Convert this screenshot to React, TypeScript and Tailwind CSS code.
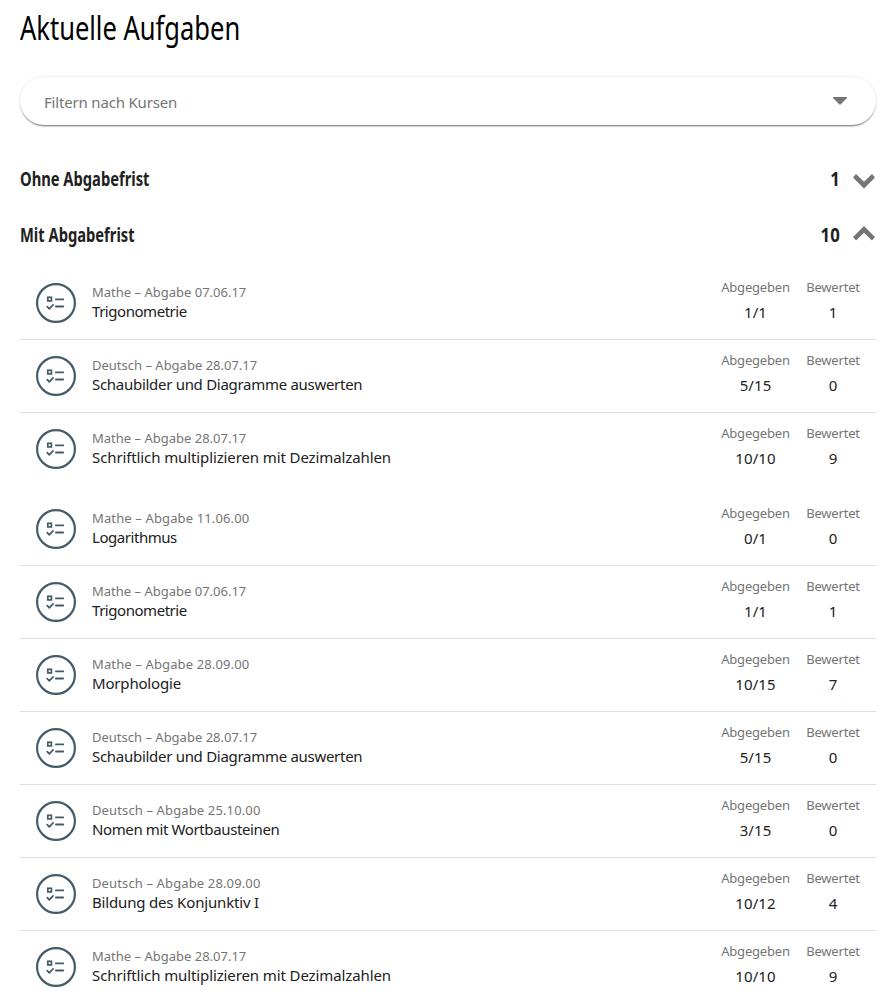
type Task = { course: string; due: string; title: string; submitted: string; graded: string };

const groups: Task[][] = [
  [
    { course: 'Mathe', due: '07.06.17', title: 'Trigonometrie', submitted: '1/1', graded: '1' },
    { course: 'Deutsch', due: '28.07.17', title: 'Schaubilder und Diagramme auswerten', submitted: '5/15', graded: '0' },
    { course: 'Mathe', due: '28.07.17', title: 'Schriftlich multiplizieren mit Dezimalzahlen', submitted: '10/10', graded: '9' },
  ],
  [
    { course: 'Mathe', due: '11.06.00', title: 'Logarithmus', submitted: '0/1', graded: '0' },
    { course: 'Mathe', due: '07.06.17', title: 'Trigonometrie', submitted: '1/1', graded: '1' },
    { course: 'Mathe', due: '28.09.00', title: 'Morphologie', submitted: '10/15', graded: '7' },
    { course: 'Deutsch', due: '28.07.17', title: 'Schaubilder und Diagramme auswerten', submitted: '5/15', graded: '0' },
    { course: 'Deutsch', due: '25.10.00', title: 'Nomen mit Wortbausteinen', submitted: '3/15', graded: '0' },
    { course: 'Deutsch', due: '28.09.00', title: 'Bildung des Konjunktiv I', submitted: '10/12', graded: '4' },
    { course: 'Mathe', due: '28.07.17', title: 'Schriftlich multiplizieren mit Dezimalzahlen', submitted: '10/10', graded: '9' },
  ],
];

const titleTracking: Record<string, string> = {
  'Trigonometrie': 'tracking-[-0.46px]',
  'Schaubilder und Diagramme auswerten': 'tracking-[-0.29px]',
  'Schriftlich multiplizieren mit Dezimalzahlen': 'tracking-[-0.11px]',
  'Logarithmus': 'tracking-[-0.45px]',
  'Morphologie': 'tracking-[-0.18px]',
  'Nomen mit Wortbausteinen': 'tracking-[-0.38px]',
  'Bildung des Konjunktiv I': 'tracking-[-0.17px]',
};

function TaskIcon() {
  return (
    <svg className="size-10 shrink-0" viewBox="0 0 40 40" fill="none" stroke="#455b6a">
      <circle cx="20" cy="20" r="18.9" strokeWidth="2.2" />
      <rect x="11.8" y="14.3" width="3.6" height="3.6" strokeWidth="1.7" />
      <path d="M19.9 16.4h7.3M19.9 23.5h7.3" strokeWidth="1.8" strokeLinecap="round" />
      <path d="M11.2 23.6l2.1 2.2 3.8-4" strokeWidth="1.7" strokeLinecap="round" strokeLinejoin="round" />
    </svg>
  );
}

function Chevron({ up = false }: { up?: boolean }) {
  return (
    <svg className="h-6 w-6 shrink-0" viewBox="0 0 24 24" fill="#757575">
      <path d={up ? 'M12 2.1L23 13.1L20 16.4L12 8.7L4 16.4L1 13.1Z' : 'M12 20.4L1 9.4L4 6.1L12 13.8L20 6.1L23 9.4Z'} />
    </svg>
  );
}

function Section({ title, count, open = false }: { title: string; count: string; open?: boolean }) {
  return (
    <div className="flex h-14 items-center font-bold text-[19px] text-[#212121]">
      <h2 className="flex-1 pb-0.5"><span className="inline-block origin-left scale-x-[0.774]">{title}</span></h2>
      <span className="mr-3 inline-block origin-right scale-x-[0.88] pb-0.5">{count}</span>
      <Chevron up={open} />
    </div>
  );
}

function Stat({ label, value, width }: { label: string; value: string; width: string }) {
  return (
    <div className={`flex flex-col items-center whitespace-nowrap ${width}`}>
      <span className="text-[13px] leading-5 tracking-[-0.18px] text-[#757575]">{label}</span>
      <span className="mt-[5px] text-[15px] leading-5 tracking-[0.1px] text-[#212121]">{value}</span>
    </div>
  );
}

function Row({ task, last }: { task: Task; last: boolean }) {
  const metaTracking = task.due.endsWith('.00') ? 'tracking-[0.13px]' : '';
  return (
    <li className={`flex h-[73px] items-start border-b px-4 ${last ? 'border-transparent' : 'border-[#e0e0e0]'}`}>
      <div className="flex h-[72px] flex-1 items-center gap-4">
        <TaskIcon />
        <div className="pb-0.5 whitespace-nowrap">
          <p className={`text-[13px] leading-[19px] text-[#757575] ${metaTracking}`}>{task.course} – Abgabe {task.due}</p>
          <p className={`text-[15px] leading-[19px] text-[#212121] ${titleTracking[task.title]}`}>{task.title}</p>
        </div>
      </div>
      <div className="flex gap-4 pt-2.5">
        <Stat label="Abgegeben" value={task.submitted} width="w-[69px]" />
        <Stat label="Bewertet" value={task.graded} width="w-[54px]" />
      </div>
    </li>
  );
}

export default function App() {
  return (
    <main className="h-[1003px] overflow-hidden bg-white px-5 font-['Noto_Sans',sans-serif]">
      <h1 className="flex h-[77px] items-start pt-[5px] text-[33px] leading-[46px] text-black">
        <span className="origin-left scale-x-[0.773] whitespace-nowrap">Aktuelle Aufgaben</span>
      </h1>
      <div className="flex h-12 items-center justify-between rounded-full bg-white pr-[29px] pl-6 shadow-[0_2px_2px_-1px_rgba(0,0,0,0.55),0_0_3px_rgba(0,0,0,0.14)]">
        <span className="pt-0.5 text-[15px] tracking-[-0.18px] text-[#757575]">Filtern nach Kursen</span>
        <svg className="h-2 w-[14px]" viewBox="0 0 14 8" fill="#757575"><path d="M0 0h14v1L7 8 0 1z" /></svg>
      </div>
      <div className="pt-[27px]">
        <Section title="Ohne Abgabefrist" count="1" />
        <Section title="Mit Abgabefrist" count="10" open />
      </div>
      <div className="flex flex-col gap-[7px] pt-[3px]">
        {groups.map((tasks, g) => (
          <ul key={g}>
            {tasks.map((task, i) => <Row key={i} task={task} last={i === tasks.length - 1} />)}
          </ul>
        ))}
      </div>
    </main>
  );
}
